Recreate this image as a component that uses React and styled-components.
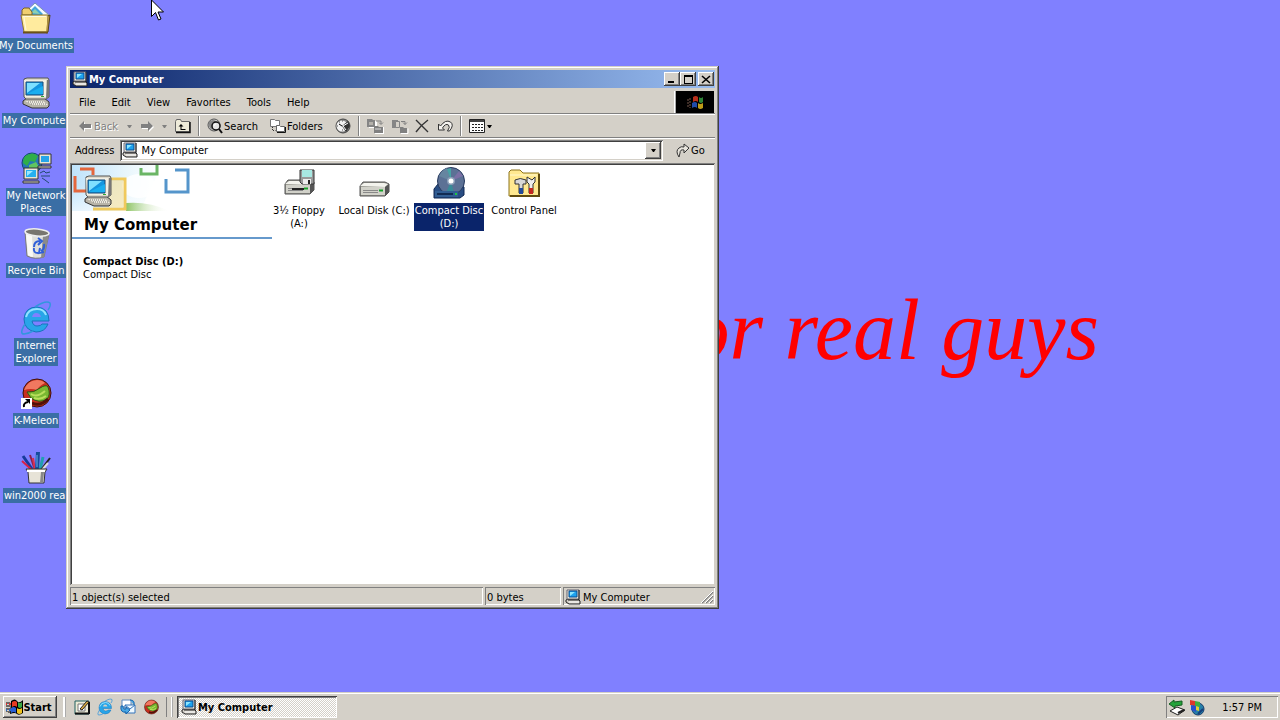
import React from "react";
import styled, { createGlobalStyle, css } from "styled-components";

const face = "#d4d0c8";

const GlobalStyle = createGlobalStyle`
  * { box-sizing: border-box; }
  body {
    margin: 0;
    overflow: hidden;
    font: 11px/13px "DejaVu Sans Condensed", "DejaVu Sans", Tahoma, sans-serif;
    color: #000;
    cursor: default;
  }
  button, input { font: inherit; color: inherit; border-radius: 0; }
  svg { display: block; flex: none; overflow: visible; }
`;

const raised = css`
  background: ${face};
  border: 0;
  box-shadow: inset -1px -1px #404040, inset 1px 1px #fff, inset -2px -2px #808080;
`;

const sunken = css`
  box-shadow: inset 1px 1px #808080, inset -1px -1px #fff;
`;

/* ---------- Desktop ---------- */

const Screen = styled.div`
  display: flex;
  flex-direction: column;
  height: 100vh;
  background: #8080ff;
`;

const Desktop = styled.main`
  position: relative;
  flex: 1;
  min-height: 0;
`;

const Wallpaper = styled.p`
  position: absolute;
  top: 284px;
  right: 181px;
  margin: 0;
  color: #f00;
  font: italic 86px/92px "Liberation Serif", "Times New Roman", serif;
  white-space: nowrap;
`;

const Shortcuts = styled.nav`
  display: flex;
  flex-direction: column;
  width: 72px;
  padding-top: 2px;
`;

const Shortcut = styled.a`
  display: flex;
  flex-direction: column;
  align-items: center;
  gap: 4px;
  height: 75px;
  color: #fff;
  text-decoration: none;
`;

const ShortcutLabel = styled.span`
  padding: 1px;
  background: #3a6ea5;
  text-align: center;
  white-space: pre;
`;

const Pointer = styled.div`
  position: absolute;
  top: 0;
  left: 151px;
`;

/* ---------- Window ---------- */

const Window = styled.section`
  position: absolute;
  inset: 66px 561px 83px 66px;
  min-width: 560px;
  display: flex;
  flex-direction: column;
  padding: 4px;
  background: ${face};
  box-shadow: inset -1px -1px #404040, inset 1px 1px #d4d0c8, inset -2px -2px #808080,
    inset 2px 2px #fff;
`;

const TitleBar = styled.header`
  display: flex;
  align-items: center;
  gap: 1px;
  height: 18px;
  margin-bottom: 1px;
  padding: 0 1px 0 2px;
  background: linear-gradient(90deg, #0a246a, #98bcf0);
  color: #fff;
`;

const Title = styled.h1`
  flex: 1;
  margin: 0;
  font-size: 11px;
  line-height: 13px;
`;

const WindowControls = styled.div`
  display: flex;
`;

const ControlButton = styled.button`
  ${raised}
  display: grid;
  place-items: center;
  width: 16px;
  height: 14px;
  padding: 0;
  margin-left: ${(p) => (p.$apart ? 2 : 0)}px;
`;

const bar = css`
  display: flex;
  align-items: center;
  border-top: 1px solid #fff;
  border-bottom: 1px solid #808080;
`;

const MenuBar = styled.div`
  ${bar}
  height: 25px;
  border-top: 0;
  padding: 0 1px;
`;

const Menus = styled.div`
  display: flex;
  flex: 1;
`;

const MenuButton = styled.button`
  padding: 5px 8px 3px;
  border: 0;
  background: none;
`;

const Throbber = styled.div`
  display: grid;
  place-items: center;
  align-self: stretch;
  width: 40px;
  margin-top: 2px;
  border-left: 2px ridge #fff;
  background: #000;
`;

const ToolBar = styled.div`
  ${bar}
  height: 24px;
  padding: 0 5px;
`;

const ToolButton = styled.button`
  display: flex;
  align-items: center;
  gap: ${(p) => p.$gap || 1}px;
  padding: 2px ${(p) => (p.$wide ? 8 : 4)}px 2px 4px;
  border: 0;
  background: none;
  &:disabled {
    color: #808080;
    text-shadow: 1px 1px #fff;
  }
`;

const CaretButton = styled(ToolButton)`
  justify-content: center;
  width: 14px;
  padding: 0;
  height: 18px;
`;

const Divider = styled.span`
  width: 2px;
  height: 20px;
  margin: 0 3px;
  border-left: 1px solid #808080;
  border-right: 1px solid #fff;
`;

const AddressBar = styled.form`
  ${bar}
  height: 25px;
  gap: 6px;
  padding: 0 5px 2px;
  border-bottom: 0;
`;

const AddressBox = styled.div`
  display: flex;
  align-items: center;
  flex: 1;
  height: 21px;
  padding: 2px;
  background: #fff;
  box-shadow: inset 1px 1px #808080, inset -1px -1px #fff, inset 2px 2px #404040,
    inset -2px -2px ${face};
`;

const AddressInput = styled.input`
  flex: 1;
  min-width: 0;
  padding: 0 3px;
  border: 0;
  outline: 0;
  background: none;
`;

const DropButton = styled.button`
  ${raised}
  display: grid;
  place-items: center;
  width: 16px;
  height: 17px;
  padding: 0;
`;

const GoButton = styled(ToolButton)`
  width: 41px;
  padding: 2px 0 2px 7px;
`;

const Content = styled.div`
  display: flex;
  flex: 1;
  min-height: 0;
  padding: 2px 1px 1px 2px;
  background: #fff;
  box-shadow: inset 1px 1px #808080, inset -1px -1px ${face}, inset 2px 2px #404040;
`;

const InfoPane = styled.aside`
  width: 200px;
`;

const Banner = styled.header`
  border-bottom: 2px solid #6699cc;
  padding-bottom: 2px;
`;

const BannerTitle = styled.h2`
  margin: 4px 0 0 12px;
  font: bold 15px/19px "DejaVu Sans", Verdana, sans-serif;
`;

const Details = styled.div`
  padding: 16px 11px;
`;

const DetailName = styled.h3`
  margin: 0;
  font-size: 11px;
  line-height: 13px;
`;

const DetailText = styled.p`
  margin: 0;
`;

const Items = styled.div`
  display: flex;
  flex-wrap: wrap;
  align-content: flex-start;
  gap: 21px;
  flex: 1;
`;

const Item = styled.a`
  display: flex;
  flex-direction: column;
  align-items: center;
  gap: 4px;
  width: 54px;
  padding-top: 2px;
  color: #000;
  text-decoration: none;
`;

const ItemLabel = styled.span`
  padding: 1px;
  text-align: center;
  white-space: pre;
  color: ${(p) => (p.$selected ? "#fff" : "#000")};
  background: ${(p) => (p.$selected ? "#0a246a" : "transparent")};
`;

const StatusBar = styled.footer`
  display: flex;
  gap: 2px;
  height: 18px;
  margin-top: 2px;
`;

const StatusPane = styled.div`
  ${sunken}
  display: flex;
  align-items: center;
  gap: 2px;
  flex: ${(p) => (p.$w ? "none" : 1)};
  width: ${(p) => (p.$w ? p.$w + "px" : "auto")};
  padding: 2px 2px 0;
`;

const Spacer = styled.span`
  flex: 1;
`;

/* ---------- Taskbar ---------- */

const TaskBar = styled.footer`
  display: flex;
  align-items: center;
  height: 28px;
  padding: 3px 2px 1px 3px;
  background: ${face};
  box-shadow: inset 0 1px ${face}, inset 0 2px #fff;
`;

const StartButton = styled.button`
  ${raised}
  display: flex;
  align-items: center;
  justify-content: center;
  width: 54px;
  height: 22px;
  padding: 0 2px 0 0;
  font-weight: bold;
`;

const Grip = styled.span`
  width: ${(p) => (p.$double ? 7 : 3)}px;
  height: 20px;
  margin: 0 4px 0 6px;
  border-left: 1px solid ${(p) => (p.$double ? "#808080" : "#fff")};
  border-right: 2px ridge #fff;
`;

const QuickLaunch = styled.div`
  display: flex;
  gap: 7px;
  padding: 0 1px 0 4px;
`;

const QuickButton = styled.button`
  display: grid;
  place-items: center;
  width: 16px;
  height: 20px;
  padding: 0;
  border: 0;
  background: none;
`;

const TaskButton = styled.button`
  display: flex;
  align-items: center;
  gap: 1px;
  width: 160px;
  height: 22px;
  padding: 2px 4px;
  border: 0;
  background: repeating-conic-gradient(#fff 0% 25%, ${face} 0% 50%) 0 0 / 2px 2px;
  box-shadow: inset 1px 1px #404040, inset -1px -1px #fff, inset 2px 2px #808080;
  font-weight: bold;
`;

const Tray = styled.div`
  ${sunken}
  display: flex;
  align-items: center;
  gap: 2px;
  width: 112px;
  height: 22px;
  padding: 0 16px 0 3px;
`;

const Clock = styled.time`
  flex: 1;
  text-align: right;
`;

/* ---------- Icons ---------- */

const Svg = ({ w = 32, h, vb, children }) => (
  <svg width={w} height={h || w} viewBox={vb || `0 0 ${w} ${h || w}`} aria-hidden="true">
    {children}
  </svg>
);

const ComputerArt = () => (
  <>
    <path d="M3 24l4-3h17l5 4v4l-2 2H12l-9-4z" fill="#b8b4a8" stroke="#333" />
    <path d="M5 24h18l5 4H13z" fill="#eeeade" />
    <path d="M8 25h16M11 27h16" stroke="#777" strokeDasharray="1 1" />
    <path d="M4 2l3-1h21l1 2v17l-3 2H6l-2-2z" fill="#dedacb" stroke="#555" />
    <path d="M27 3h2v17l-3 2z" fill="#777" />
    <path d="M4 3h22v17H5z" fill="#f2efe4" />
    <path d="M6 5h17v13H6z" fill="#1596e0" stroke="#174a78" />
    <path d="M7 6h13L7 16z" fill="#7fe0ff" />
    <path d="M7 17h16V9z" fill="#1aaef0" />
    <path d="M21 19.500h3" stroke="#3a3" />
  </>
);
const Computer = () => <Svg><ComputerArt /></Svg>;
const SmallComputer = () => (
  <Svg w={16}>
    <path d="M1 11l2-1h10l2 2v3H4l-3-2z" fill="#d4d0c8" stroke="#222" />
    <path d="M4 13h10" stroke="#fff" />
    <path d="M2 1h12v9H2z" fill="#ece9d8" stroke="#667" />
    <path d="M14 1v10H3" fill="none" stroke="#222" />
    <path d="M4 2h8v6H4z" fill="#1da2ee" stroke="#0a4a90" />
    <path d="M5 3h5L5 7z" fill="#8ce6ff" />
  </Svg>
);
const Documents = () => (
  <Svg>
    <path d="M5 10L15 1l14 12-8 8z" fill="#f4fbff" stroke="#7894b0" />
    <path d="M9 10l6-6 8 8-6 6z" fill="#41a6dd" />
    <path d="M11 11l4-4 5 5z" fill="#8ed0b0" />
    <path d="M2 8l2-2h5l3 4v3H2z" fill="#f0cf70" stroke="#7c6420" />
    <path d="M1 13h27l-1 17H4z" fill="#ffeb9e" stroke="#8b7430" />
    <path d="M28 14l2-1-2 17-2 1" fill="#b79846" stroke="#55451a" />
    <path d="M3 30.500h25" stroke="#6b5218" strokeWidth="2" />
    <path d="M3 14.500h23M4 15l2 13" stroke="#fffbe0" fill="none" />
  </Svg>
);
const Network = () => (
  <Svg>
    <circle cx="12" cy="11" r="10" fill="#2477b8" stroke="#14486e" />
    <path d="M5 4q8-5 13 0l-3 6-5-1-3 5-4-3q0-4 2-7z" fill="#2fae49" />
    <path d="M9 13l7-3 3 5-5 4-5-1z" fill="#60c560" />
    <path d="M19 2h12v10H19z" fill="#e8e5d6" stroke="#333" />
    <path d="M21 4h8v6h-8z" fill="#25a5ea" />
    <path d="M18 14h13v2H18z" fill="#d4d0c8" stroke="#333" />
    <path d="M4 16h14v11H4z" fill="#e8e5d6" stroke="#333" />
    <path d="M6 18h10v7H6z" fill="#25b0f0" />
    <path d="M7 19h6l-6 5z" fill="#9ae8ff" />
    <path d="M3 29h16v2H3z" fill="#d4d0c8" stroke="#333" />
    <path d="M20 21l4-2 2 2 4-1M21 24h9M22 26l3 2 4 3" fill="none" stroke="#224b70" />
  </Svg>
);
const RecycleBin = () => (
  <Svg>
    <path d="M5 5l2 24q8 4 17 1l5-23z" fill="#dfdfdc" stroke="#777" />
    <path d="M23 9l6-2-5 23-3 1z" fill="#8b8b8b" />
    <path d="M6 7l2 21q3 2 5 2L12 9z" fill="#f9f9f5" />
    <ellipse cx="17" cy="5.500" rx="12" ry="3.500" fill="#77756f" stroke="#eee" strokeWidth="1.500" transform="rotate(5 17 6)" />
    <path d="M14 20q0-6 6-6M18 11l4 3-4 4M24 17q1 5-3 7M24 25l-5 1 1-5M18 26q-5 0-4-5" fill="none" stroke="#305fd8" strokeWidth="2" />
  </Svg>
);
const ExplorerArt = ({ back = "#8080ff" }) => (
  <>
    <path d="M28 22q-3 8-12 8Q4 28 4 17 5 5 17 5q12 1 12 14H12q1 5 5 5 4 0 5-2z" fill="#28a5e8" stroke="#1873bd" />
    <path d="M12 15h9q-1-4-5-4-3 0-4 4z" fill={back} />
    <path d="M6 15Q8 7 17 7q7 0 9 6" fill="none" stroke="#94e2ff" strokeWidth="2" />
    <path d="M5 22Q-1 32 4 32q4 0 9-3M15 5Q26-2 30 1q1 3-2 7" fill="none" stroke="#3296de" strokeWidth="1.500" />
  </>
);
const Explorer = () => <Svg><ExplorerArt /></Svg>;
const MelonArt = () => (
  <>
    <circle cx="17" cy="16" r="14" fill="#c72d1e" stroke="#3e1208" />
    <path d="M4 13Q8 3 17 3q5 0 8 3-6 3-8 7-6-2-13 0z" fill="#f07860" />
    <path d="M7 15q7 1 13-4 6-4 8-1 3 8-1 12-8 5-16-1z" fill="#79b832" stroke="#2b5716" />
    <path d="M11 17q6 4 14-3M14 21q7 2 12-2" stroke="#b9df5c" strokeWidth="2" fill="none" />
    <path d="M12 26q8 4 16-4" stroke="#521008" strokeWidth="3" fill="none" />
  </>
);
const Melon = () => (
  <Svg>
    <MelonArt />
    <path d="M1 21h11v11H1z" fill="#fff" />
    <path d="M4 30q-1-4 4-5" fill="none" stroke="#000" strokeWidth="2" />
    <path d="M5 22h5v5z" />
  </Svg>
);
const Pencils = () => (
  <Svg>
    <path d="M3 4l9 13" stroke="#173b9b" strokeWidth="3" />
    <path d="M2 9l10 9" stroke="#d82045" strokeWidth="2" />
    <path d="M10 3l5 15" stroke="#8b1f4f" strokeWidth="2" />
    <path d="M13 6l2 12" stroke="#d83050" strokeWidth="2" />
    <path d="M18 0l-1 18" stroke="#164b9b" strokeWidth="4" />
    <path d="M17 3v12" stroke="#6bb4ea" />
    <path d="M23 5l-3 13" stroke="#20a0b0" strokeWidth="3" />
    <path d="M30 6l-9 12" stroke="#222" strokeWidth="2" />
    <path d="M28 11l-6 7" stroke="#ddd" strokeWidth="2" />
    <path d="M6 17h21l-2 3-1 11H9L8 20z" fill="#e7e3d7" stroke="#333" />
    <path d="M7 18h18v2H7z" fill="#fff" />
    <path d="M21 20h3l-1 11h-3z" fill="#888" />
  </Svg>
);
const Drive = ({ y = 0 }) => (
  <g transform={`translate(0 ${y})`}>
    <path d="M2 17l3-4h22l4 2v8l-4 4H2z" fill="#989890" stroke="#555" />
    <path d="M2 17l4-3h20l4 1-3 3z" fill="#f3f3ed" />
    <path d="M3 18h24v8H3z" fill="#d1d1c9" />
    <path d="M27 18l4-3v8l-4 4z" fill="#555" />
    <path d="M5 21.500h15M5 23.500h15" stroke="#888" />
    <path d="M21 21.500h4" stroke="#16a229" strokeWidth="2" />
  </g>
);
const Floppy = () => (
  <Svg>
    <Drive />
    <path d="M9 22h12" stroke="#222" strokeWidth="2" />
    <path d="M17 3h14v14H19l-2-2z" fill="#999" stroke="#333" />
    <path d="M19 3h10v7H19z" fill="#a7e8e2" />
    <path d="M20 12h8v5h-8z" fill="#eee" />
    <path d="M25 13h2v4h-2z" fill="#222" />
  </Svg>
);
const HardDisk = () => <Svg><Drive y={2} /></Svg>;
const CompactDisc = () => (
  <Svg>
    <path d="M1 22l4-5h22l4 3v8l-4 3H1z" fill="#294d83" stroke="#102952" />
    <circle cx="18" cy="14" r="13.500" fill="#5c7195" stroke="#26395e" />
    <path d="M18 14L6 9q3-6 8-8z" fill="#6685a0" />
    <path d="M18 14L14 2l4-1z" fill="#48a4a5" />
    <path d="M18 14l8-10 4 5z" fill="#7b70a5" />
    <path d="M18 14l-5 12q4 2 8 0z" fill="#398b98" />
    <circle cx="18" cy="14" r="4" fill="#8d9fb8" />
    <circle cx="18" cy="14" r="2.500" fill="#fff" />
    <path d="M2 24h23v6H2z" fill="#315d92" />
    <path d="M4 27h16" stroke="#122b52" strokeWidth="2" />
    <path d="M22 27h2" stroke="#20c840" strokeWidth="2" />
  </Svg>
);
const ControlPanel = () => (
  <Svg>
    <path d="M1 5l2-2h9l3 3h16v23H1z" fill="#ffe990" stroke="#8d741c" />
    <path d="M31 7v22H2" fill="none" stroke="#5f4b10" strokeWidth="2" />
    <path d="M2 8h27" stroke="#fff9ce" />
    <path d="M7 13q5-3 11 0v4h-3v9h-4v-9H7z" fill="#d8d8d8" stroke="#333" />
    <path d="M19 10v5l2 2v9h4v-9l2-2v-5l-3 3z" fill="#eee" stroke="#333" />
    <path d="M11 21h4v6h-4z" fill="#234b9b" />
    <path d="M21 21h4v6h-4z" fill="#c42820" />
  </Svg>
);
const FlagArt = () => (
  <>
    <path d="M6 3q3-2 5 0v5q-2-2-5 0z" fill="#e63b22" />
    <path d="M12 3q2 2 4 0v5q-2 2-4 0z" fill="#39a744" />
    <path d="M5 9q3-2 5 0v5q-2-2-5 0z" fill="#285ed5" />
    <path d="M11 9q2 2 5 0v5q-3 2-5 0z" fill="#efc31f" />
  </>
);
const StartFlag = () => (
  <Svg w={17} h={16}>
    <path d="M5 2q4-3 6 0t6-1v13q-4 3-6 1t-7 0z" fill="#000" />
    <FlagArt />
    <path d="M1 3v10M3 3v11" stroke="#000" strokeDasharray="2 1" />
    <path d="M3 5h2M0 5h1" stroke="#d33" strokeWidth="2" />
    <path d="M3 11h2M0 11h1" stroke="#26c" strokeWidth="2" />
  </Svg>
);
const ThrobberFlag = () => (
  <Svg w={17} h={16}>
    <g opacity=".8"><FlagArt /></g>
    <path d="M3 4v10M1 5v8" stroke="#79594d" strokeDasharray="2 1" />
  </Svg>
);
const Arrow = ({ flip }) => (
  <Svg w={13} h={10}>
    <path
      d={flip ? "M14 6L9 1v3H2v4h7v3z" : "M1 6l5-5v3h7v4H6v3z"}
      fill="#fff"
    />
    <path
      d={flip ? "M13 5L8 0v3H1v4h7v3z" : "M0 5l5-5v3h7v4H5v3z"}
      fill="#808080"
    />
  </Svg>
);
const Caret = ({ color = "#000" }) => (
  <Svg w={5} h={3}><path d="M0 0h5L3 3H2z" fill={color} /></Svg>
);
const UpFolder = () => (
  <Svg w={16}>
    <path d="M.5 3.500l1-2h4l1 2h8v10H.500z" fill="#eeebd9" stroke="#666" />
    <path d="M15 4v10.500H1" fill="none" stroke="#111" strokeWidth="1.500" />
    <path d="M6 6L3.500 8.500h2V12h5v-1h-4V8.500h2z" />
  </Svg>
);
const SearchIcon = () => (
  <Svg w={16}>
    <circle cx="7" cy="7" r="6" fill="#ccc" stroke="#555" />
    <path d="M2 4q4-4 8 0l-5 8Q1 9 2 4z" fill="#888" />
    <circle cx="9" cy="8" r="4" fill="#e4e4e4" stroke="#111" strokeWidth="1.500" />
    <path d="M12 11l3 4" stroke="#111" strokeWidth="2" />
    <path d="M7 8q0-2 2-2" fill="none" stroke="#fff" />
  </Svg>
);
const FoldersIcon = () => (
  <Svg w={16}>
    <path d="M.5 1.500h4l1 1h4v6h-9z" fill="#fff" stroke="#777" />
    <path d="M6.500 7.500h3l1 1h4v5h-8z" fill="#fff" stroke="#666" />
    <path d="M15.500 9v5.500H7" fill="none" stroke="#111" />
    <path d="M2.500 9v3.500h3" fill="none" stroke="#333" strokeDasharray="1 1" />
  </Svg>
);
const HistoryIcon = () => (
  <Svg w={16}>
    <circle cx="8" cy="8" r="7" fill="#888" stroke="#444" />
    <circle cx="7" cy="8" r="5.500" fill="#f2f2f2" />
    <path d="M7 8l6-5 2 5-4 6z" fill="#333" />
    <path d="M8 8l5-3M8 8l3 4" stroke="#fff" />
    <path d="M7 8L4 6" stroke="#000" />
    <path d="M2 8h1M7 12h1M4 4h1M7 3h1" stroke="#555" />
  </Svg>
);
const MoveIcon = () => (
  <Svg w={16}>
    <path d="M1 1h5l1 1h2v7H1zM7 8h9v7H7z" fill="#fff" transform="translate(1 1)" />
    <path d="M0 1h5l1 1h2v7H0z" fill="#858585" />
    <path d="M2 4h4v3H2z" fill="#b5b2ac" />
    <path d="M7 8h4l1 1h4v6H7z" fill="#808080" />
    <path d="M8 11h6" stroke="#ddd" />
    <path d="M9 3h5v3M12 4.500l2 2 2-2" fill="none" stroke="#808080" />
  </Svg>
);
const CopyIcon = () => (
  <Svg w={16}>
    <path d="M1 2h6v8H1z" fill="#858585" />
    <path d="M4.500 3.500h4v6h-4z" fill={face} stroke="#858585" />
    <path d="M9 9h3l1 1h3v5H9z" fill="#808080" />
    <path d="M10 15.500h7v-5" fill="none" stroke="#fff" />
    <path d="M10 3.500h4v3M12 4.500l2 2 2-2" fill="none" stroke="#808080" />
  </Svg>
);
const DeleteIcon = () => (
  <Svg w={14} h={14}><path d="M1 1l12 12M13 1Q6 6 1 13" fill="none" stroke="#333" strokeWidth="1.400" /></Svg>
);
const UndoIcon = () => (
  <Svg w={16} h={14}>
    <path d="M1.500 5v6h6L5.500 9q3-5 6-3 2 2-1 6h2q5-6 1-9-5-3-10 4z" fill="#f4f2ee" stroke="#333" />
  </Svg>
);
const ViewsIcon = () => (
  <Svg w={16}>
    <path d="M.5 1.500h15v13H.500z" fill="#fff" stroke="#222" />
    <path d="M1 3h14" stroke="#444" strokeWidth="2" />
    <path d="M3 6.500h11M3 9.500h11M3 12.500h11" stroke="#222" strokeDasharray="2 1" />
  </Svg>
);
const GoIcon = () => (
  <Svg w={14} h={15}>
    <path d="M3 14Q-1 8 3 5q2-2 5-1V1l5 4-5 5V7Q4 6 4 10z" fill="#e7e4dc" stroke="#333" />
  </Svg>
);
const DesktopIcon = () => (
  <Svg w={16}>
    <path d="M1 2h14v13H1z" fill="#ecebd7" stroke="#206060" />
    <path d="M1 14.500h14M15 3v12" stroke="#111" strokeWidth="2" />
    <path d="M4 5h7v7H4z" fill="#fff" stroke="#777" />
    <path d="M6 10l7-8 2 1-7 8z" fill="#e0b040" stroke="#222" />
  </Svg>
);
const MailIcon = () => (
  <Svg w={16}>
    <path d="M2 1h9v7H2z" fill="#fff" stroke="#5b88c0" />
    <path d="M5 6h10v8H5z" fill="#eef8ff" stroke="#3575bb" />
    <path d="M5 6l5 4 5-4" fill="none" stroke="#3575bb" />
    <path d="M1 7q-1 7 5 6v2l4-4-4-3v2Q3 11 3 7zM10 1q5 0 4 5" fill="#49a7e4" stroke="#1765ad" />
  </Svg>
);
const TrayDevice = () => (
  <Svg w={17} h={17}>
    <path d="M1 12l7-4 8 3-7 5z" fill="#fff" stroke="#222" />
    <path d="M9 14l6-3" stroke="#222" strokeWidth="2" />
    <path d="M0 5l5-4v2l8-1v4l-7 1v2z" fill="#24a33b" stroke="#145d22" />
  </Svg>
);
const TrayGlobe = () => (
  <Svg w={17} h={17}>
    <circle cx="10" cy="10" r="6" fill="#267fa8" stroke="#163a68" />
    <path d="M2 1l5 1v5L2 6z" fill="#df3828" />
    <path d="M7 2l5 1v5L7 7z" fill="#3fae3f" />
    <path d="M3 6l5 1v6l-5-2z" fill="#2850cc" />
    <path d="M8 7l3 1v4l-3-1z" fill="#e5ce30" />
    <path d="M10 15l5-5" stroke="#153e7a" strokeWidth="2" />
  </Svg>
);
const BannerArt = () => (
  <Svg w={120} h={47}>
    <defs>
      <linearGradient id="sky" x1="0" x2="1">
        <stop offset="0" stopColor="#bfe3fb" />
        <stop offset=".6" stopColor="#e8f6fc" />
        <stop offset="1" stopColor="#fff" />
      </linearGradient>
      <linearGradient id="grass" x1="0" x2="1">
        <stop offset="0" stopColor="#8fc565" />
        <stop offset="1" stopColor="#fff" stopOpacity="0" />
      </linearGradient>
      <linearGradient id="fade" x1="0" x2="0" y1="0" y2="1">
        <stop offset="0" stopColor="#fff" stopOpacity="0" />
        <stop offset="1" stopColor="#fff" stopOpacity=".6" />
      </linearGradient>
    </defs>
    <path d="M0 0h90L68 46H0z" fill="url(#sky)" />
    <path d="M0 20h80v26H0z" fill="url(#fade)" />
    <ellipse cx="67" cy="21" rx="17" ry="12" fill="#fff" opacity=".8" />
    <path d="M54 38q22-2 44 8H54z" fill="url(#grass)" />
    <path d="M8 4h13v6M3 11v15h12" fill="none" stroke="#e4673d" strokeWidth="3" />
    <path d="M69 3v6h16V0" fill="none" stroke="#6ab565" strokeWidth="3" />
    <path d="M103 5h13v22H94V14" fill="none" stroke="#5595cb" strokeWidth="3" />
    <path d="M36 14h17v30H21" fill="none" stroke="#f0c95c" strokeWidth="3" />
    <path d="M37 16h14v26H37z" fill="#f9dc86" opacity=".5" />
    <g transform="translate(10 10)"><ComputerArt /></g>
  </Svg>
);
const ResizeGrip = () => (
  <Svg w={12} h={12}>
    <path d="M1 12L12 1M5 12l7-7M9 12l3-3" stroke="#808080" strokeWidth="1.500" />
    <path d="M0 12L12 0M4 12l8-8M8 12l4-4" stroke="#fff" />
  </Svg>
);

/* ---------- Data ---------- */

const shortcuts = [
  ["My Documents", Documents],
  ["My Computer", Computer],
  ["My Network\nPlaces", Network],
  ["Recycle Bin", RecycleBin],
  ["Internet\nExplorer", Explorer],
  ["K-Meleon", Melon],
  ["win2000 real", Pencils],
];

const drives = [
  ["3½ Floppy\n(A:)", Floppy],
  ["Local Disk (C:)", HardDisk],
  ["Compact Disc\n(D:)", CompactDisc, true],
  ["Control Panel", ControlPanel],
];

const menus = ["File", "Edit", "View", "Favorites", "Tools", "Help"];

export default function App() {
  return (
    <Screen>
      <GlobalStyle />
      <Desktop>
        <Wallpaper>or real guys</Wallpaper>
        <Shortcuts aria-label="Desktop">
          {shortcuts.map(([name, Icon]) => (
            <Shortcut href="#" key={name}>
              <Icon />
              <ShortcutLabel>{name}</ShortcutLabel>
            </Shortcut>
          ))}
        </Shortcuts>

        <Window>
          <TitleBar>
            <SmallComputer />
            <Title>My Computer</Title>
            <WindowControls>
              <ControlButton aria-label="Minimize">
                <Svg w={8} h={8}><path d="M0 6h6v2H0z" /></Svg>
              </ControlButton>
              <ControlButton aria-label="Maximize">
                <Svg w={9} h={9}><path d="M0 0h9v9H0zM1 2v6h7V2z" fillRule="evenodd" /></Svg>
              </ControlButton>
              <ControlButton aria-label="Close" $apart>
                <Svg w={8} h={7}><path d="M0 0l8 7M8 0L0 7" stroke="#000" strokeWidth="1.600" /></Svg>
              </ControlButton>
            </WindowControls>
          </TitleBar>

          <MenuBar>
            <Menus>
              {menus.map((m) => <MenuButton key={m}>{m}</MenuButton>)}
            </Menus>
            <Throbber><ThrobberFlag /></Throbber>
          </MenuBar>

          <ToolBar>
            <ToolButton disabled $gap={2}><Arrow />Back</ToolButton>
            <CaretButton disabled aria-label="Back history"><Caret color="#808080" /></CaretButton>
            <ToolButton disabled aria-label="Forward"><Arrow flip /></ToolButton>
            <CaretButton disabled aria-label="Forward history"><Caret color="#808080" /></CaretButton>
            <ToolButton aria-label="Up"><UpFolder /></ToolButton>
            <Divider />
            <ToolButton $wide><SearchIcon />Search</ToolButton>
            <ToolButton $wide><FoldersIcon />Folders</ToolButton>
            <ToolButton aria-label="History"><HistoryIcon /></ToolButton>
            <Divider />
            <ToolButton disabled aria-label="Move To"><MoveIcon /></ToolButton>
            <ToolButton disabled aria-label="Copy To"><CopyIcon /></ToolButton>
            <ToolButton aria-label="Delete"><DeleteIcon /></ToolButton>
            <ToolButton aria-label="Undo"><UndoIcon /></ToolButton>
            <Divider />
            <ToolButton aria-label="Views" $gap={2}><ViewsIcon /><Caret /></ToolButton>
          </ToolBar>

          <AddressBar onSubmit={(e) => e.preventDefault()}>
            <label htmlFor="address">Address</label>
            <AddressBox>
              <SmallComputer />
              <AddressInput id="address" defaultValue="My Computer" />
              <DropButton type="button" aria-label="Show addresses"><Caret /></DropButton>
            </AddressBox>
            <GoButton><GoIcon />Go</GoButton>
          </AddressBar>

          <Content>
            <InfoPane>
              <Banner>
                <BannerArt />
                <BannerTitle>My Computer</BannerTitle>
              </Banner>
              <Details>
                <DetailName>Compact Disc (D:)</DetailName>
                <DetailText>Compact Disc</DetailText>
              </Details>
            </InfoPane>
            <Items>
              {drives.map(([name, Icon, selected]) => (
                <Item href="#" key={name}>
                  <Icon />
                  <ItemLabel $selected={selected}>{name}</ItemLabel>
                </Item>
              ))}
            </Items>
          </Content>

          <StatusBar>
            <StatusPane>1 object(s) selected</StatusPane>
            <StatusPane $w={76}>0 bytes</StatusPane>
            <StatusPane $w={152}>
              <SmallComputer />My Computer<Spacer /><ResizeGrip />
            </StatusPane>
          </StatusBar>
        </Window>

        <Pointer>
          <Svg w={13} h={21}>
            <path d="M.5 0v16.500l4-4 3 7.500 2.500-1-3-7h5.500z" fill="#fff" stroke="#000" />
          </Svg>
        </Pointer>
      </Desktop>

      <TaskBar>
        <StartButton><StartFlag />Start</StartButton>
        <Grip />
        <QuickLaunch>
          <QuickButton aria-label="Show Desktop"><DesktopIcon /></QuickButton>
          <QuickButton aria-label="Internet Explorer"><Svg w={16} vb="0 0 32 32"><ExplorerArt back={face} /></Svg></QuickButton>
          <QuickButton aria-label="Outlook Express"><MailIcon /></QuickButton>
          <QuickButton aria-label="K-Meleon"><Svg w={16} vb="0 0 32 32"><MelonArt /></Svg></QuickButton>
        </QuickLaunch>
        <Grip $double />
        <TaskButton><SmallComputer />My Computer</TaskButton>
        <Spacer />
        <Tray>
          <TrayDevice />
          <TrayGlobe />
          <Clock>1:57 PM</Clock>
        </Tray>
      </TaskBar>
    </Screen>
  );
}
